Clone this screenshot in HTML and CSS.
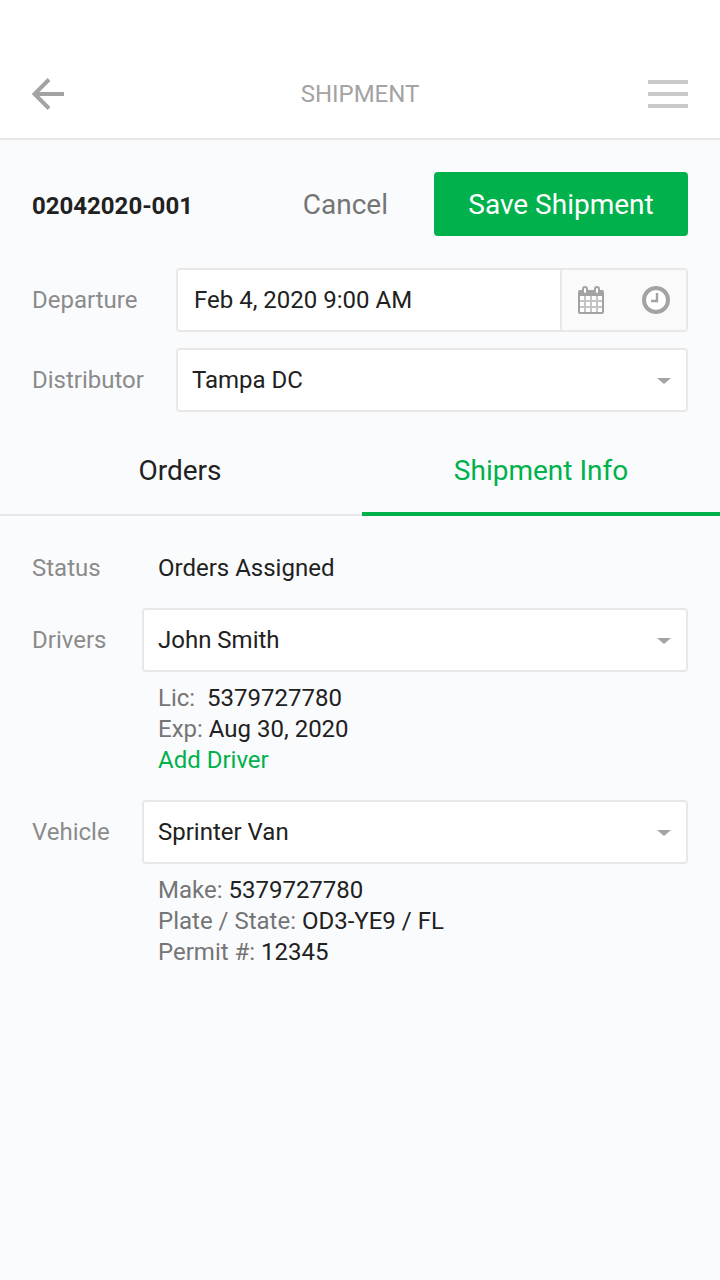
FILE: index.html
```html
<!DOCTYPE html>
<html lang="en">
<head>
<meta charset="utf-8">
<meta name="viewport" content="width=device-width, initial-scale=1">
<title>Shipment</title>
<link rel="stylesheet" href="styles.css">
</head>
<body>
<header class="topbar">
  <button class="icon-button" type="button" aria-label="Back">
    <svg width="32" height="32" viewBox="0 0 32 32"><path d="M17 1.500 2.500 16 17 30.500M3 16H32" fill="none" stroke="#a3a3a3" stroke-width="4"/></svg>
  </button>
  <h1 class="title">SHIPMENT</h1>
  <button class="icon-button menu" type="button" aria-label="Menu">
    <svg width="40" height="28" viewBox="0 0 40 28"><path d="M0 2H40M0 14H40M0 26H40" stroke="#cacaca" stroke-width="4"/></svg>
  </button>
</header>
<main>
  <section class="summary">
    <div class="actions">
      <h2 class="number">02042020-001</h2>
      <button class="button cancel" type="button">Cancel</button>
      <button class="button save" type="button">Save Shipment</button>
    </div>
    <div class="field">
      <label class="label" for="departure">Departure</label>
      <div class="box">
        <input class="control date" id="departure" type="text" value="Feb 4, 2020 9:00 AM">
        <div class="pickers">
          <button class="icon-button" type="button" aria-label="Choose date">
            <svg width="26" height="28" viewBox="0 0 26 28">
              <rect x="1" y="5" width="24" height="22" rx="1" fill="#fff" stroke="#a3a3a3" stroke-width="2"/>
              <path d="M1 4H25V10H1Z" fill="#a3a3a3"/>
              <path d="M7 10V26M13 10V26M19 10V26M2 15H24M2 21H24" stroke="#c4c4c4" stroke-width="2"/>
              <rect x="5" y="1" width="4" height="7" rx="2" fill="#fff" stroke="#a3a3a3" stroke-width="2"/>
              <rect x="17" y="1" width="4" height="7" rx="2" fill="#fff" stroke="#a3a3a3" stroke-width="2"/>
            </svg>
          </button>
          <button class="icon-button" type="button" aria-label="Choose time">
            <svg width="28" height="28" viewBox="0 0 28 28"><circle cx="14" cy="14" r="12" fill="#fff" stroke="#a3a3a3" stroke-width="4"/><path d="M15 7V15H9" fill="none" stroke="#a3a3a3" stroke-width="2.400"/></svg>
          </button>
        </div>
      </div>
    </div>
    <div class="field">
      <label class="label" for="distributor">Distributor</label>
      <div class="box">
        <select class="control" id="distributor"><option>Tampa DC</option></select>
        <svg class="caret" width="14" height="6" viewBox="0 0 14 6"><path d="M0 0H14L7 6Z"/></svg>
      </div>
    </div>
  </section>
  <nav class="tabs">
    <a class="tab" href="#orders">Orders</a>
    <a class="tab active" href="#info" aria-current="page">Shipment Info</a>
  </nav>
  <section class="info" id="info">
    <div class="row">
      <span class="label">Status</span>
      <span class="status">Orders Assigned</span>
    </div>
    <div class="row">
      <label class="label" for="driver">Drivers</label>
      <div class="box">
        <select class="control" id="driver"><option>John Smith</option></select>
        <svg class="caret" width="14" height="6" viewBox="0 0 14 6"><path d="M0 0H14L7 6Z"/></svg>
      </div>
      <div class="details">
        <p><span class="key">Lic:&nbsp;</span> 5379727780</p>
        <p><span class="key">Exp:</span> Aug 30, 2020</p>
        <a class="add" href="#driver">Add Driver</a>
      </div>
    </div>
    <div class="row">
      <label class="label" for="vehicle">Vehicle</label>
      <div class="box">
        <select class="control" id="vehicle"><option>Sprinter Van</option></select>
        <svg class="caret" width="14" height="6" viewBox="0 0 14 6"><path d="M0 0H14L7 6Z"/></svg>
      </div>
      <div class="details">
        <p><span class="key">Make:</span> 5379727780</p>
        <p><span class="key">Plate / State:</span> OD3-YE9 / FL</p>
        <p><span class="key">Permit #:</span> 12345</p>
      </div>
    </div>
  </section>
</main>
</body>
</html>
```
FILE: styles.css
```css
* { box-sizing: border-box; }
body {
  margin: 0;
  min-height: 100vh;
  background: #fafbfd;
  color: #212121;
  font: 24px/32px Roboto, "Liberation Sans", sans-serif;
}
h1, h2, p { margin: 0; font-size: inherit; }
button, input, select { font: inherit; color: inherit; }
svg { display: block; }
.topbar {
  display: grid;
  grid-template-columns: 1fr auto 1fr;
  align-items: center;
  padding: 72px 32px 22px;
  min-height: 140px;
  background: #fff;
  border-bottom: 2px solid #e8e8e8;
}
.title { color: #a3a3a3; font-weight: 400; }
.icon-button {
  justify-self: start;
  padding: 0;
  border: 0;
  background: none;
  cursor: pointer;
}
.menu { justify-self: end; }
.summary {
  display: flex;
  flex-direction: column;
  gap: 16px;
  padding: 32px 32px 12px;
}
.actions { display: flex; align-items: center; margin-bottom: 16px; }
.number { flex: 1; padding-top: 4px; font-weight: 700; }
.button {
  height: 64px;
  border: 0;
  border-radius: 4px;
  font-size: 28px;
  cursor: pointer;
}
.cancel { padding: 2px 46px 0; background: none; color: #757575; }
.save { min-width: 254px; padding: 2px 32px 0; background: #00b14c; color: #fff; }
.field { display: grid; grid-template-columns: 144px 1fr; align-items: center; }
.label { color: #8b8b8b; }
.box {
  position: relative;
  display: flex;
  height: 64px;
  border: 2px solid #e8e8e8;
  border-radius: 4px;
  background: #fff;
}
.control {
  flex: 1;
  min-width: 0;
  padding: 0 14px;
  border: 0;
  border-radius: 4px;
  background: none;
  appearance: none;
}
.date { padding: 0 16px; }
.pickers {
  display: flex;
  align-items: center;
  justify-content: space-between;
  width: 126px;
  padding: 0 16px;
  border-left: 2px solid #e8e8e8;
  background: #fafafa;
}
.caret {
  position: absolute;
  top: 28px;
  right: 15px;
  fill: #a3a3a3;
  pointer-events: none;
}
.tabs {
  display: grid;
  grid-template-columns: 1fr 1fr;
  height: 92px;
  border-bottom: 2px solid #e8e8e8;
}
.tab {
  padding: 31px 0 25px;
  color: inherit;
  font-size: 28px;
  text-align: center;
  text-decoration: none;
}
.active {
  margin: 0 0 -2px 2px;
  border-bottom: 4px solid #00b14c;
  color: #00b14c;
}
.info { padding: 36px 32px; }
.row {
  display: grid;
  grid-template-columns: 110px 1fr;
  align-items: center;
  margin-bottom: 24px;
}
.status { padding-left: 16px; }
.details { grid-column: 2; padding: 11px 0 0 16px; line-height: 31px; }
.key { color: #757575; }
.add { display: block; color: #00b14c; text-decoration: none; }
```
